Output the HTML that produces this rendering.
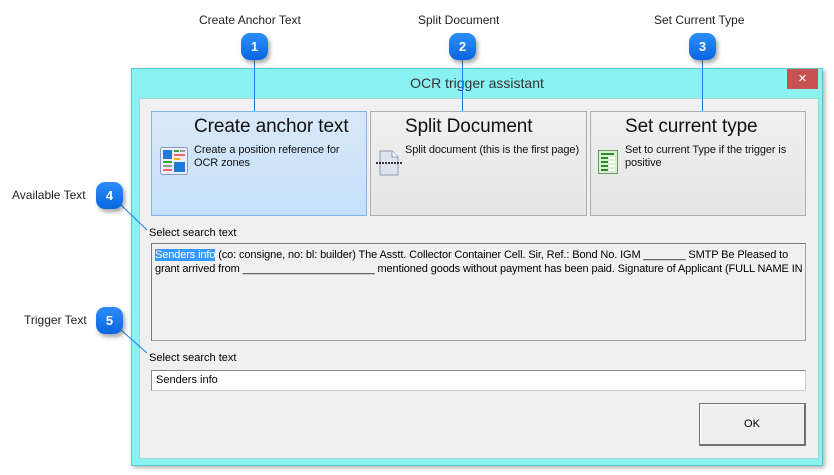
<!DOCTYPE html>
<html><head><meta charset="utf-8"><style>
*{margin:0;padding:0;box-sizing:border-box}
body{width:834px;height:475px;background:#fff;position:relative;overflow:hidden;font-family:"Liberation Sans",sans-serif;font-size:12px;color:#000}
.a{position:absolute}
.lbl{position:absolute;font-size:12px;color:#222}
.bub{position:absolute;width:27px;height:27px;border-radius:9px;background:linear-gradient(#2c8dfb,#0a66e0);color:#fff;font-weight:bold;font-size:13px;text-align:center;line-height:27px;box-shadow:2px 3px 4px rgba(0,0,0,.35)}
.win{left:131px;top:68px;width:692px;height:398px;background:#8af2f0;border:1px solid #5bc9c6;box-shadow:2px 2px 4px rgba(0,0,0,.3)}
.panel{left:139px;top:98px;width:680px;height:361px;background:#f0f0f0;border:1px solid #a0d8d6}
.card{position:absolute;top:111px;height:105px;border:1px solid #adadad;background:linear-gradient(#f0f0f0,#e5e5e5)}
.card.sel{background:linear-gradient(#d9e8f8,#c4e0fa);border-color:#7eb4ea}
.card h{position:absolute;top:4px;font-size:19px;color:#111;white-space:nowrap;letter-spacing:-0.1px}
.card p{position:absolute;top:32px;font-size:11px;line-height:13px;color:#111;letter-spacing:-0.1px}
.t{font-size:11px}
</style></head><body>
<div class="lbl" style="left:199px;top:13px">Create Anchor Text</div>
<div class="lbl" style="left:418px;top:13px">Split Document</div>
<div class="lbl" style="left:654px;top:13px">Set Current Type</div>
<div class="lbl" style="left:12px;top:188px">Available Text</div>
<div class="lbl" style="left:24px;top:313px">Trigger Text</div>

<div class="a win"></div>
<div class="a" style="left:131px;top:75px;width:692px;text-align:center;font-size:14px;color:#333">OCR trigger assistant</div>
<div class="a" style="left:787px;top:69px;width:31px;height:20px;background:#c75050;color:#fff;text-align:center;line-height:20px;font-size:15px">×</div>
<div class="a panel"></div>

<div class="card sel" style="left:151px;width:216px">
 <h style="left:42px">Create anchor text</h><p style="left:42px;width:172px">Create a position reference for OCR zones</p>
 <svg class="a" style="left:8px;top:35px" width="28" height="28" viewBox="0 0 28 28"><rect x="0.5" y="0.5" width="27" height="27" rx="2" fill="#eef" stroke="#8899bb"/><rect x="3" y="3" width="9" height="9" fill="#1c7ad8"/><rect x="14" y="3" width="5" height="2" fill="#3a3"/><rect x="20" y="3" width="5" height="2" fill="#999"/><rect x="14" y="7" width="11" height="2" fill="#e66"/><rect x="14" y="11" width="6" height="2" fill="#fa0"/><rect x="3" y="14" width="9" height="2" fill="#3a3"/><rect x="14" y="15" width="11" height="10" fill="#1c7ad8"/><rect x="3" y="18" width="9" height="2" fill="#999"/><rect x="3" y="22" width="9" height="2" fill="#e66"/></svg>
</div>
<div class="card" style="left:370px;width:217px">
 <h style="left:34px">Split Document</h><p style="left:34px;width:182px;white-space:nowrap">Split document (this is the first page)</p>
 <svg class="a" style="left:5px;top:37px" width="26" height="28" viewBox="0 0 26 28"><path d="M4 2h12l6 6v18H4z" fill="#dde4ee" stroke="#8a9ab0"/><path d="M16 2v6h6" fill="#fff" stroke="#8a9ab0"/><line x1="0" y1="14" x2="26" y2="14" stroke="#000" stroke-width="1.5" stroke-dasharray="2 1"/></svg>
</div>
<div class="card" style="left:590px;width:216px">
 <h style="left:34px">Set current type</h><p style="left:34px;width:175px">Set to current Type if the trigger is positive</p>
 <svg class="a" style="left:7px;top:38px" width="20" height="24" viewBox="0 0 20 24"><rect x="0.5" y="0.5" width="19" height="23" fill="#d8eed0" stroke="#6a9a60"/><g fill="#2e8a2e"><rect x="3" y="3" width="13" height="2"/><rect x="3" y="7" width="7" height="2"/><rect x="3" y="11" width="7" height="2"/><rect x="3" y="15" width="7" height="2"/><rect x="3" y="19" width="7" height="2"/></g><g fill="#fff"><rect x="11" y="7" width="6" height="2"/><rect x="11" y="11" width="6" height="2"/><rect x="11" y="15" width="6" height="2"/><rect x="11" y="19" width="6" height="2"/></g></svg>
</div>

<div class="a t" style="left:149px;top:227px">Select search text</div>
<div class="a t" style="left:151px;top:243px;width:655px;height:98px;border:1px solid #a0a0a0;border-top-color:#777;border-left-color:#777;background:#f0f0f0;padding:4px 3px;line-height:14px;white-space:nowrap;overflow:hidden;letter-spacing:-0.12px"><span style="background:#3399ff;color:#fff">Senders info</span> (co: consigne, no: bl: builder) The Asstt. Collector Container Cell. Sir, Ref.: Bond No. IGM _______ SMTP Be Pleased to<br>grant arrived from ______________________ mentioned goods without payment has been paid. Signature of Applicant (FULL NAME IN</div>
<div class="a t" style="left:149px;top:352px">Select search text</div>
<div class="a t" style="left:151px;top:370px;width:655px;height:21px;border:1px solid #ccc;border-top-color:#888;border-left-color:#888;background:#fff;padding:3px 4px">Senders info</div>
<div class="a t" style="left:699px;top:403px;width:107px;height:43px;border:1px solid #707070;border-right-width:2px;border-bottom-width:2px;background:#efefef;text-align:center;line-height:41px;box-shadow:inset 1px 1px 0 #fff">OK</div>

<svg class="a" style="left:0;top:0" width="834" height="475"><g stroke="#1a7ee8" stroke-width="1" fill="none"><line x1="254.5" y1="55" x2="254.5" y2="111"/><line x1="462.5" y1="55" x2="462.5" y2="111"/><line x1="702.5" y1="55" x2="702.5" y2="111"/><line x1="121" y1="205" x2="147" y2="230"/><line x1="121" y1="330" x2="147" y2="353"/></g></svg>
<div class="bub" style="left:241px;top:33px">1</div>
<div class="bub" style="left:449px;top:33px">2</div>
<div class="bub" style="left:689px;top:33px">3</div>
<div class="bub" style="left:96px;top:182px">4</div>
<div class="bub" style="left:96px;top:307px">5</div>
</body></html>
